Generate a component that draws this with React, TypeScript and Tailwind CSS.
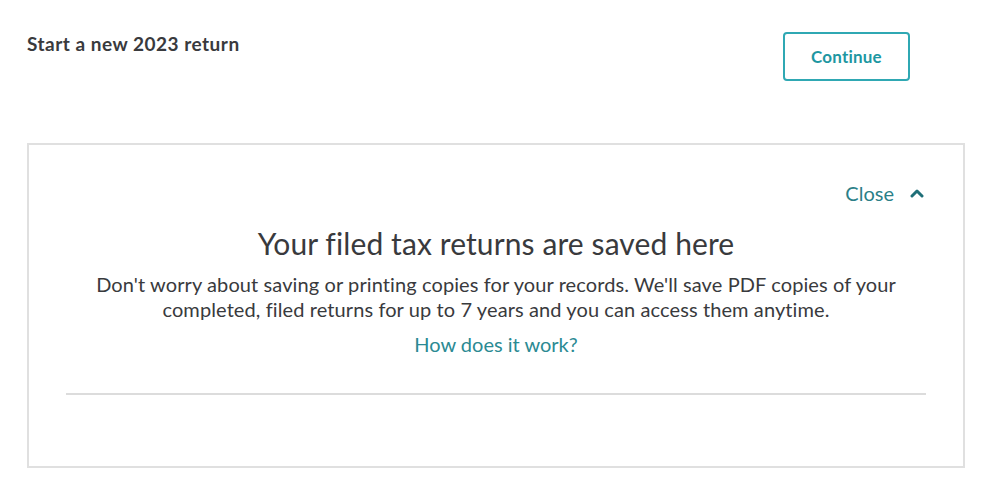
export default function App() {
  return (
    <div className="min-h-screen w-[999px] bg-white font-['Lato','Noto_Sans',sans-serif] text-[#393a3d]">
      <div className="flex items-start justify-between pl-[27px] pr-[89px] pt-[32px]">
        <h2 className="mt-[1px] text-[19px] font-bold leading-[22px] tracking-[0.5px]">Start a new 2023 return</h2>
        <button className="h-[49px] w-[127px] rounded-[4px] border-2 border-[#2fa8b3] text-[17px] font-bold text-[#1d97a2] tracking-[0.2px]">
          Continue
        </button>
      </div>

      <div className="mx-[27px] mt-[62px] h-[325px] w-[938px] border-2 border-[#e0e0e0] px-[37px]">
        <div className="flex justify-end pt-[35px] pr-[2px]">
          <button className="flex items-center gap-[16px] text-[20px] leading-[26px] text-[#2b7f88]">
            Close
            <svg width="14" height="10" viewBox="0 0 14 10" fill="none">
              <path d="M2 8L7 3L12 8" stroke="#1f6f78" strokeWidth="3" strokeLinecap="round" strokeLinejoin="round" />
            </svg>
          </button>
        </div>
        <div className="flex flex-col items-center text-center">
          <h1 className="mt-[18px] text-[30px] font-normal leading-[38px] tracking-[0.1px]">
            Your filed tax returns are saved here
          </h1>
          <p className="mt-[10px] text-[20px] leading-[25px] tracking-[0.1px]">
            Don't worry about saving or printing copies for your records. We'll save PDF copies of your
            <br />
            completed, filed returns for up to 7 years and you can access them anytime.
          </p>
          <a className="mt-[9px] text-[20px] leading-[26px] text-[#2b8a93]">How does it work?</a>
        </div>
        <div className="mt-[36px] h-[2px] bg-[#dcdcdc]" />
      </div>
    </div>
  );
}
